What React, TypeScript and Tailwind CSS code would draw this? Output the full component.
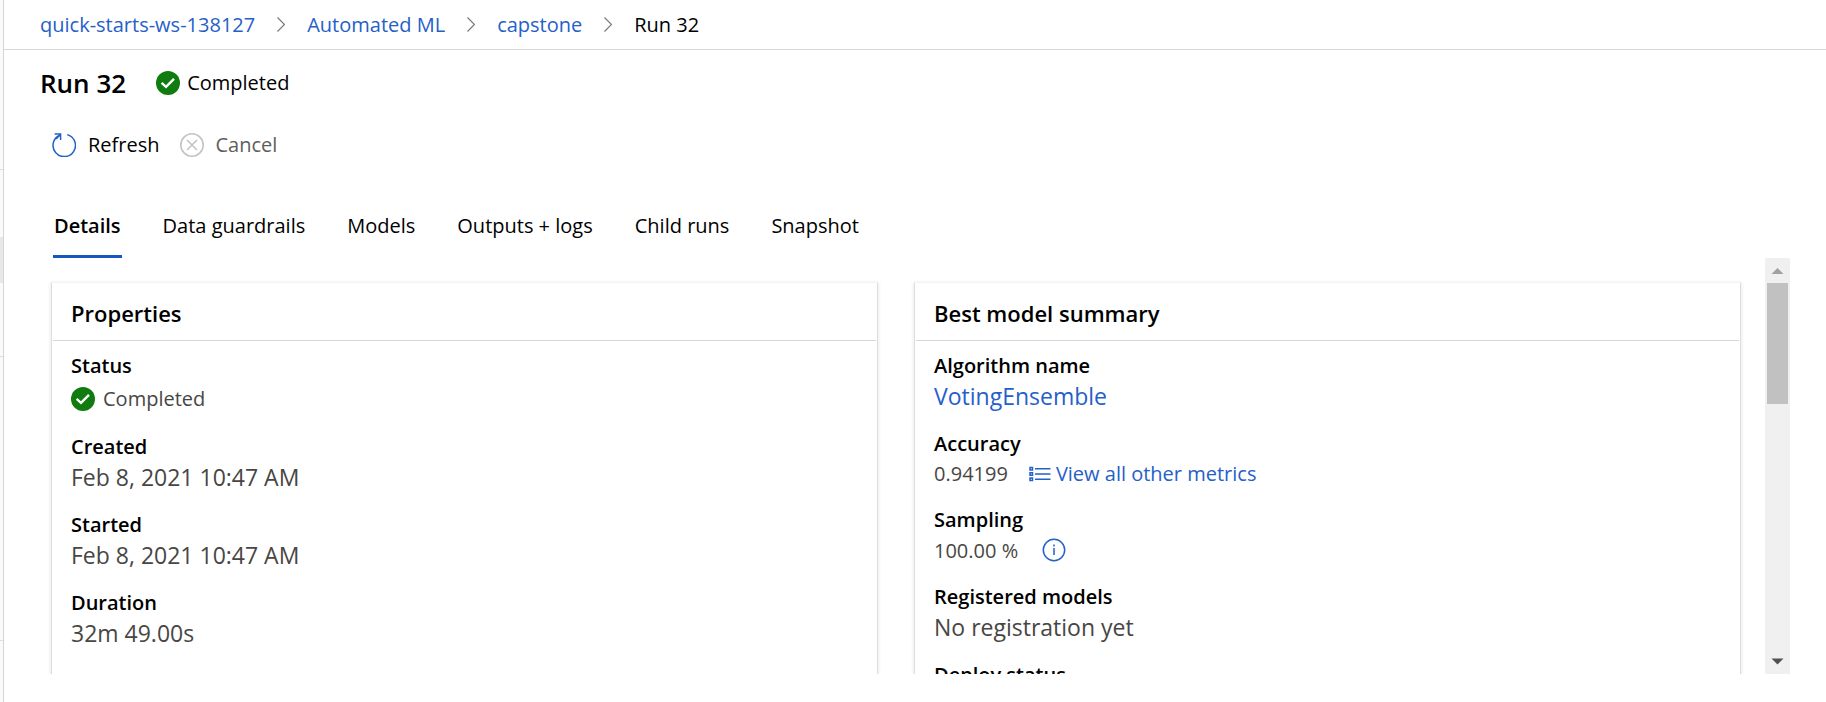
import React from "react";

const breadcrumbs = ["quick-starts-ws-138127", "Automated ML", "capstone"];
const tabs = ["Details", "Data guardrails", "Models", "Outputs + logs", "Child runs", "Snapshot"];

function CheckCircle() {
  return (
    <svg className="size-6 shrink-0" viewBox="0 0 24 24" aria-hidden="true">
      <circle cx="12" cy="12" r="12" fill="#107c10" />
      <path d="M5.6 11.8 10 15.8 18 7.8" fill="none" stroke="#fff" strokeWidth="2.4" />
    </svg>
  );
}

function Chevron() {
  return (
    <svg className="h-4 w-2 shrink-0" viewBox="0 0 8 16" fill="none" stroke="#767676" strokeWidth="1.2" aria-hidden="true">
      <path d="M.5 .5 7.5 7.5 .5 14.5" />
    </svg>
  );
}

function RefreshIcon() {
  return (
    <svg className="size-6 shrink-0" viewBox="0 0 24 24" fill="none" stroke="#2560c8" strokeWidth="1.5" aria-hidden="true">
      <path d="M15.2 1.6A11.2 11.2 0 1 1 7.6 2.2" />
      <path d="M2.6 1H8.6V7M8.4 1.3 4.2 6" />
    </svg>
  );
}

function CancelIcon() {
  return (
    <svg className="size-6 shrink-0" viewBox="0 0 24 24" fill="none" stroke="#c4c4c4" strokeWidth="1.6" aria-hidden="true">
      <circle cx="12" cy="12" r="11.2" />
      <path d="m7 7 10 10M17 7 7 17" />
    </svg>
  );
}

function ListIcon() {
  return (
    <svg className="h-4 w-6 shrink-0" viewBox="0 0 24 16" fill="none" stroke="#2560c8" aria-hidden="true">
      <path d="M2 1.5h2.5v2.5H2zM2 6.7h2.5v2.5H2zM2 12h2.5v2.5H2z" strokeWidth="1.5" />
      <path d="M7 2.7h15.5M7 8h15.5M7 13.3h15.5" strokeWidth="1.4" />
    </svg>
  );
}

function InfoIcon() {
  return (
    <svg className="size-6" viewBox="0 0 24 24" fill="none" stroke="#2560c8" strokeWidth="1.5" aria-hidden="true">
      <circle cx="12" cy="12" r="10.7" />
      <path d="M12 10v7M12 6.6v2" />
    </svg>
  );
}

function Card({ title, children }: { title: string; children: React.ReactNode }) {
  return (
    <section className="min-w-0 flex-1 border border-t-[#f3f3f3] border-x-[#dedede] bg-white shadow-[0_1px_4px_rgba(0,0,0,0.12)]">
      <h2 className="mx-px flex h-[58px] items-center border-b border-[#d6d6d6] px-[18px] pt-1 text-[22px] font-semibold">{title}</h2>
      <dl className="flex flex-col gap-4 px-[19px] pt-[9px] pb-6">{children}</dl>
    </section>
  );
}

function Field({ label, small = false, children }: { label: string; small?: boolean; children?: React.ReactNode }) {
  return (
    <div>
      <dt className="text-[20px] leading-[31px] font-semibold">{label}</dt>
      <dd
        className={
          small
            ? "flex items-center text-[20px] leading-[29px] text-[#484644]"
            : "flex min-h-[31px] items-center text-[23px] leading-[31px] text-[#484644]"
        }
      >
        {children}
      </dd>
    </div>
  );
}

export default function App() {
  return (
    <div className="flex h-screen bg-white font-['Open_Sans','Noto_Sans',sans-serif] text-black">
      <div className="flex w-1 shrink-0 flex-col border-r border-[#d6d6d6] bg-[#fafafa]" aria-hidden="true">
        <div className="h-[170px] border-b border-[#dedede]" />
        <div className="h-[67px]" />
        <div className="h-[46px] bg-[#e8e8e8]" />
        <div className="h-[74px] border-b border-[#dedede]" />
        <div className="h-[284px] border-b border-[#dedede]" />
      </div>
      <main className="flex min-w-0 flex-1 flex-col">
        <nav aria-label="Breadcrumb" className="flex h-[50px] shrink-0 items-center border-b border-[#d6d6d6] px-9 text-[20px]">
          {breadcrumbs.map((item) => (
            <React.Fragment key={item}>
              <a href="#" className="text-[#2560c8]">{item}</a>
              <span className="flex w-[52px] justify-center"><Chevron /></span>
            </React.Fragment>
          ))}
          <span aria-current="page">Run 32</span>
        </nav>

        <header className="flex h-[66px] shrink-0 items-center px-9">
          <h1 className="text-[26px] font-semibold">Run 32</h1>
          <div className="ml-[30px] flex items-center gap-[7px] text-[20px]">
            <CheckCircle />
            <span>Completed</span>
          </div>
        </header>

        <div className="flex h-[58px] shrink-0 items-center gap-5 px-12 text-[20px]">
          <button type="button" className="flex items-center gap-3"><RefreshIcon />Refresh</button>
          <button type="button" disabled className="flex items-center gap-3 text-[#605e5c]"><CancelIcon />Cancel</button>
        </div>

        <div role="tablist" className="mt-[22px] flex h-[62px] shrink-0 gap-10 px-[49px] text-[20px]">
          {tabs.map((tab, i) => (
            <button
              key={tab}
              type="button"
              role="tab"
              aria-selected={i === 0}
              className={i === 0 ? "border-b-3 border-[#1558c0] px-px font-semibold" : "border-b-3 border-transparent px-px"}
            >
              {tab}
            </button>
          ))}
        </div>

        <div className="mr-9 mb-7 flex min-h-0 flex-1">
          <div className="flex min-w-0 flex-1 items-start gap-9 overflow-hidden pt-6 pr-6 pl-[47px]">
            <Card title="Properties">
              <Field label="Status">
                <span className="flex items-center gap-2 pt-0.5 pb-px text-[20px]"><CheckCircle />Completed</span>
              </Field>
              <Field label="Created">Feb 8, 2021 10:47 AM</Field>
              <Field label="Started">Feb 8, 2021 10:47 AM</Field>
              <Field label="Duration">32m 49.00s</Field>
              <Field label="Compute target" />
            </Card>
            <Card title="Best model summary">
              <Field label="Algorithm name"><a href="#" className="text-[#2560c8]">VotingEnsemble</a></Field>
              <Field label="Accuracy" small>
                0.94199
                <a href="#" className="ml-5 flex items-center gap-1 text-[#2560c8]"><ListIcon />View all other metrics</a>
              </Field>
              <Field label="Sampling" small>
                100.00 %
                <button type="button" aria-label="Sampling information" className="my-[3px] ml-6"><InfoIcon /></button>
              </Field>
              <Field label="Registered models">No registration yet</Field>
              <Field label="Deploy status" />
            </Card>
          </div>
          <div className="flex w-[25px] shrink-0 flex-col bg-[#f0f0f0]" aria-hidden="true">
            <svg className="h-[25px] w-full shrink-0" viewBox="0 0 25 25"><path d="M6.5 16 12.5 10l6 6z" fill="#a0a0a0" /></svg>
            <div className="mx-0.5 h-[121px] bg-[#c1c1c1]" />
            <svg className="mt-auto h-[25px] w-full shrink-0" viewBox="0 0 25 25"><path d="M6.5 9.5 12.5 15.5l6-6z" fill="#505050" /></svg>
          </div>
        </div>
      </main>
    </div>
  );
}
